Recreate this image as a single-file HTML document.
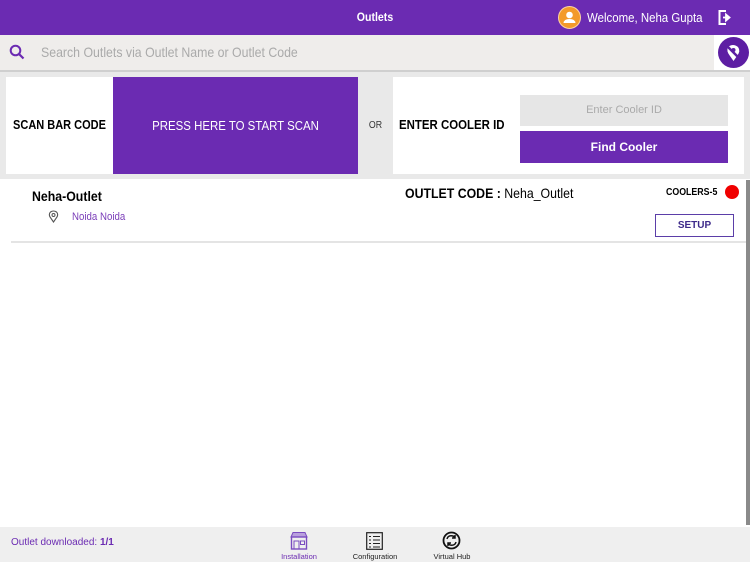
<!DOCTYPE html>
<html><head><style>
*{margin:0;padding:0;box-sizing:border-box}
body{width:750px;height:562px;position:relative;overflow:hidden;background:#fff;font-family:"Liberation Sans",sans-serif}
.a{position:absolute}
.n{transform:scaleX(.88);transform-origin:left top;white-space:nowrap}
.nc{transform:scaleX(.88);transform-origin:center top;white-space:nowrap}
</style></head><body>
<div class="a" style="left:0;top:0;width:750px;height:35px;background:#6b2bb2"></div>
<div class="a nc" style="left:0;top:10px;width:750px;text-align:center;color:#fff;font-size:12px;font-weight:bold">Outlets</div>
<div class="a" style="left:558px;top:6px;width:23px;height:23px;border-radius:50%;background:#f39a2a;border:1px solid #fbd5a5"></div>
<svg class="a" style="left:558px;top:6px" width="23" height="23" viewBox="0 0 23 23"><circle cx="11.5" cy="9" r="3.3" fill="#fff"/><path d="M5.5 17 Q6 13 11.5 13 Q17 13 17.5 17Z" fill="#fff"/></svg>
<div class="a n" style="left:587px;top:10px;color:#fff;font-size:13px">Welcome, Neha Gupta</div>
<svg class="a" style="left:717px;top:9px" width="16" height="17" viewBox="0 0 16 17"><path d="M9 2H2.5V15H9" fill="none" stroke="#fff" stroke-width="2"/><path d="M6 8.5H11M9 5.5L12.5 8.5L9 11.5Z" fill="#fff" stroke="#fff" stroke-width="1.8"/></svg>
<div class="a" style="left:0;top:35px;width:750px;height:35px;background:#efedeb"></div>
<svg class="a" style="left:9px;top:44px" width="16" height="16" viewBox="0 0 16 16"><circle cx="6.5" cy="6.5" r="4.8" fill="none" stroke="#6b2bb2" stroke-width="2"/><path d="M10 10L14.5 14.5" stroke="#6b2bb2" stroke-width="2.2"/></svg>
<div class="a n" style="left:41px;top:44px;color:#aaa;font-size:14px">Search Outlets via Outlet Name or Outlet Code</div>
<div class="a" style="left:714px;top:35px;width:36px;height:35px;background:#fff"></div>
<div class="a" style="left:718px;top:37px;width:31px;height:31px;border-radius:50%;background:#5d1ea3"></div>
<svg class="a" style="left:718px;top:37px" width="31" height="31" viewBox="0 0 31 31"><path d="M10 10 Q15 6 20 10 Q23 14 19 19 L15.5 24 L12 19 Q8 14 10 10Z" fill="#fff"/><path d="M8 8L23 23" stroke="#5d1ea3" stroke-width="2.5"/><circle cx="15.5" cy="13" r="2" fill="#5d1ea3"/></svg>
<div class="a" style="left:0;top:70px;width:750px;height:2px;background:#cfcfcf"></div>
<div class="a" style="left:0;top:72px;width:750px;height:107px;background:#e9e9e9"></div>
<div class="a" style="left:6px;top:77px;width:107px;height:97px;background:#fff"></div>
<div class="a nc" style="left:6px;top:118px;width:107px;text-align:center;font-size:12.5px;font-weight:bold">SCAN BAR CODE</div>
<div class="a" style="left:113px;top:77px;width:245px;height:97px;background:#6b2bb2"></div>
<div class="a nc" style="left:113px;top:118px;width:245px;text-align:center;font-size:13px;color:#fff">PRESS HERE TO START SCAN</div>
<div class="a nc" style="left:358px;top:120px;width:35px;text-align:center;font-size:10px;color:#333">OR</div>
<div class="a" style="left:393px;top:77px;width:351px;height:97px;background:#fff"></div>
<div class="a n" style="left:399px;top:117px;font-size:13px;font-weight:bold">ENTER COOLER ID</div>
<div class="a" style="left:520px;top:95px;width:208px;height:31px;background:#e6e6e6;color:#aaa;font-size:11px;text-align:center;line-height:31px">Enter Cooler ID</div>
<div class="a" style="left:520px;top:131px;width:208px;height:32px;background:#6b2bb2;color:#fff;font-size:12px;font-weight:bold;text-align:center;line-height:32px">Find Cooler</div>
<div class="a" style="left:746px;top:180px;width:4px;height:345px;background:#8a8a8a"></div>
<div class="a n" style="left:32px;top:188px;font-size:14px;font-weight:bold">Neha-Outlet</div>
<svg class="a" style="left:48px;top:210px" width="11" height="13" viewBox="0 0 11 13"><path d="M5.5 12 L2 7 Q0.5 4 2.5 2 Q5.5 0 8.5 2 Q10.5 4 9 7Z" fill="none" stroke="#555" stroke-width="1.1"/><circle cx="5.5" cy="5" r="1.5" fill="none" stroke="#555"/></svg>
<div class="a n" style="left:72px;top:211px;font-size:11px;color:#7a3db8">Noida Noida</div>
<div class="a n" style="left:405px;top:185px;font-size:14px"><b>OUTLET CODE :</b> Neha_Outlet</div>
<div class="a n" style="left:666px;top:187px;font-size:10px;font-weight:bold">COOLERS-5</div>
<div class="a" style="left:725px;top:185px;width:14px;height:14px;border-radius:50%;background:#f00000"></div>
<div class="a" style="left:655px;top:214px;width:79px;height:23px;border:1px solid #5b3ea8;color:#3d2a8a;font-size:10px;font-weight:bold;text-align:center;line-height:21px">SETUP</div>
<div class="a" style="left:11px;top:241px;width:735px;height:2px;background:#e4e4e4"></div>
<div class="a" style="left:0;top:527px;width:750px;height:35px;background:#efefef"></div>
<div class="a" style="left:11px;top:537px;font-size:10px;color:#6b2bb2">Outlet downloaded: <b>1/1</b></div>
<svg class="a" style="left:289px;top:531px" width="20" height="19" viewBox="0 0 20 19"><path d="M2 6 L4 1.5 H16 L18 6Z" fill="#b9a0dd" stroke="#7a4cc0"/><rect x="2.5" y="6" width="15" height="12" fill="none" stroke="#7a4cc0" stroke-width="1.4"/><rect x="5" y="10" width="5" height="8" fill="none" stroke="#7a4cc0"/><rect x="11.5" y="10" width="4" height="3.5" fill="none" stroke="#7a4cc0"/></svg>
<div class="a" style="left:270px;top:552px;width:58px;text-align:center;font-size:7.5px;color:#6b2bb2">Installation</div>
<svg class="a" style="left:366px;top:532px" width="17" height="18" viewBox="0 0 17 18"><rect x="0.7" y="0.7" width="15.6" height="16.6" fill="none" stroke="#222" stroke-width="1.2"/><path d="M3 4.5h2M7 4.5h7M3 8h2M7 8h7M3 11.5h2M7 11.5h7M3 15h2M7 15h7" stroke="#222"/></svg>
<div class="a" style="left:345px;top:552px;width:60px;text-align:center;font-size:7.5px;color:#222">Configuration</div>
<svg class="a" style="left:442px;top:531px" width="19" height="19" viewBox="0 0 19 19"><circle cx="9.5" cy="9.5" r="8" fill="none" stroke="#111" stroke-width="1.8"/><path d="M5 8 Q6 4 11 5 L13 6.5M13 4v3h-3M14 11 Q13 15 8 14 L6 12.5M6 15v-3h3" fill="none" stroke="#111" stroke-width="1.5"/></svg>
<div class="a" style="left:422px;top:552px;width:60px;text-align:center;font-size:7.5px;color:#222">Virtual Hub</div>
</body></html>
